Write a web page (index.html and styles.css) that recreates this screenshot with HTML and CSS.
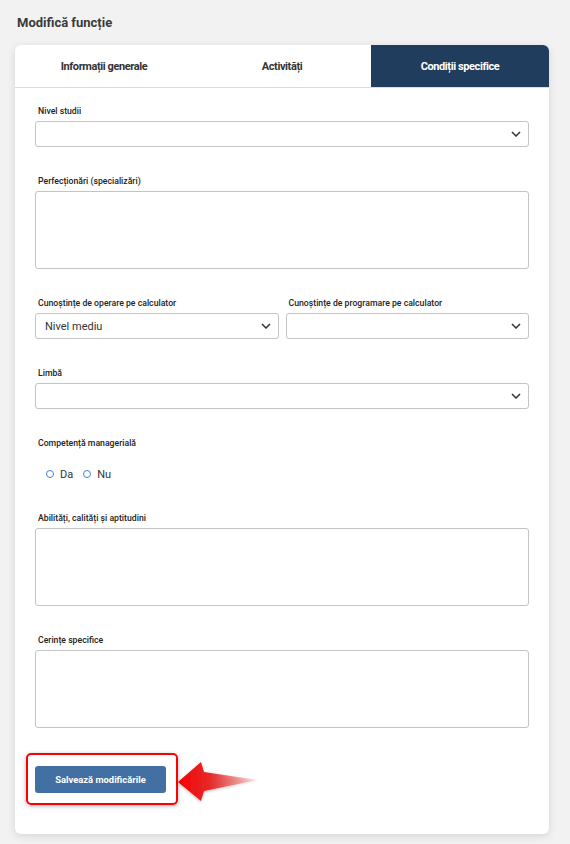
FILE: index.html
```html
<!DOCTYPE html>
<html lang="ro">
<head>
<meta charset="utf-8">
<title>Modifică funcție</title>
<link rel="stylesheet" href="styles.css">
</head>
<body>
<h1 class="page-title">Modifică funcție</h1>
<div class="card">
  <div class="tabs">
    <div class="tab">Informații generale</div>
    <div class="tab">Activități</div>
    <div class="tab active">Condiții specifice</div>
  </div>
  <form class="form">
    <div class="field">
      <label class="label">Nivel studii</label>
      <div class="select"><span class="value"></span><svg class="chev" viewBox="0 0 10 6" width="10" height="6"><path d="M1 1l4 4 4-4" fill="none" stroke="#333" stroke-width="1.5"/></svg></div>
    </div>
    <div class="field">
      <label class="label">Perfecționări (specializări)</label>
      <div class="textarea"></div>
    </div>
    <div class="field row">
      <div class="col">
        <label class="label">Cunoștințe de operare pe calculator</label>
        <div class="select"><span class="value">Nivel mediu</span><svg class="chev" viewBox="0 0 10 6" width="10" height="6"><path d="M1 1l4 4 4-4" fill="none" stroke="#333" stroke-width="1.5"/></svg></div>
      </div>
      <div class="col">
        <label class="label">Cunoștințe de programare pe calculator</label>
        <div class="select"><span class="value"></span><svg class="chev" viewBox="0 0 10 6" width="10" height="6"><path d="M1 1l4 4 4-4" fill="none" stroke="#333" stroke-width="1.5"/></svg></div>
      </div>
    </div>
    <div class="field">
      <label class="label">Limbă</label>
      <div class="select"><span class="value"></span><svg class="chev" viewBox="0 0 10 6" width="10" height="6"><path d="M1 1l4 4 4-4" fill="none" stroke="#333" stroke-width="1.5"/></svg></div>
    </div>
    <div class="field radio-field">
      <label class="label">Competență managerială</label>
      <div class="radios">
        <span class="radio"><span class="circle"></span>Da</span>
        <span class="radio"><span class="circle"></span>Nu</span>
      </div>
    </div>
    <div class="field">
      <label class="label">Abilități, calități și aptitudini</label>
      <div class="textarea"></div>
    </div>
    <div class="field">
      <label class="label">Cerințe specifice</label>
      <div class="textarea"></div>
    </div>
    <div class="actions">
      <div class="highlight-wrap">
        <button type="button" class="btn">Salvează modificările</button>
        <span class="highlight"></span>
        <svg class="arrow" width="90" height="50" viewBox="0 0 90 50">
          <defs>
            <linearGradient id="ag" x1="0" y1="0" x2="1" y2="0">
              <stop offset="0" stop-color="#f40000"/>
              <stop offset="0.4" stop-color="#e62a2a"/>
              <stop offset="1" stop-color="#f04a4a" stop-opacity="0.1"/>
            </linearGradient>
            <filter id="sh" x="-20%" y="-30%" width="140%" height="160%">
              <feDropShadow dx="0" dy="1" stdDeviation="1.5" flood-color="#000" flood-opacity="0.3"/>
            </filter>
          </defs>
          <polygon points="2,24 25,4 28,14 82,22 28,33 25,43" fill="url(#ag)" filter="url(#sh)"/>
        </svg>
      </div>
    </div>
  </form>
</div>
</body>
</html>
```
FILE: styles.css
```css
* { box-sizing: border-box; }
html, body { margin: 0; padding: 0; }
body {
  background: #f2f2f2;
  font-family: Roboto, "Liberation Sans", Arial, sans-serif;
  color: #333;
  width: 570px;
  min-height: 844px;
  overflow: hidden;
}
.page-title {
  margin: 0;
  padding: 13px 0 0 17px;
  font-size: 13px;
  line-height: 20px;
  font-weight: 700;
  color: #3a3a3a;
}
.card {
  margin: 12px 0 0 15px;
  width: 534px;
  background: #fff;
  border-radius: 6px;
  box-shadow: 0 2px 8px rgba(0,0,0,0.12);
  overflow: hidden;
}
.tabs {
  display: grid;
  grid-template-columns: 1fr 1fr 1fr;
  border-bottom: 1px solid #dcdcdc;
}
.tab {
  height: 42px;
  display: flex;
  align-items: center;
  justify-content: center;
  font-size: 11px;
  letter-spacing: -0.4px;
  font-weight: 700;
  color: #333;
}
.tab.active {
  background: #213d5e;
  color: #fff;
}
.form {
  padding: 16px 20px 41px 20px;
}
.field { margin-bottom: 27px; }
.label {
  display: block;
  font-size: 8.7px;
  line-height: 14px;
  font-weight: 500;
  color: #222;
  margin-bottom: 3px;
  padding-left: 3px;
  white-space: nowrap;
}
.select {
  height: 26px;
  border: 1px solid #c4c4c4;
  border-radius: 3px;
  display: flex;
  align-items: center;
  justify-content: space-between;
  padding: 0 7px 0 9px;
  background: #fff;
}
.value {
  font-size: 11px;
  color: #333;
}
.chev { display: block; }
.textarea {
  height: 78px;
  border: 1px solid #c4c4c4;
  border-radius: 3px;
}
.row {
  display: grid;
  grid-template-columns: 1fr 1fr;
  column-gap: 7px;
}
.radio-field { margin-bottom: 29px; }
.radios {
  margin-top: 16px;
  height: 16px;
  display: flex;
  align-items: center;
  gap: 10px;
  padding-left: 11px;
}
.radio {
  display: flex;
  align-items: center;
  gap: 6px;
  font-size: 11px;
  color: #333;
}
.circle {
  width: 8px;
  height: 8px;
  border: 1px solid #4a80d8;
  border-radius: 50%;
}
.actions {
  padding-top: 11px;
}
.highlight-wrap {
  position: relative;
  display: inline-block;
}
.btn {
  display: block;
  width: 131px;
  height: 27px;
  border: none;
  border-radius: 3px;
  background: #4270a2;
  color: #fff;
  font-family: Roboto, "Liberation Sans", Arial, sans-serif;
  font-size: 9.4px;
  font-weight: 700;
  padding: 0;
}
.highlight {
  position: absolute;
  left: -9px;
  top: -13px;
  width: 152px;
  height: 52px;
  border: 2px solid #f00;
  border-radius: 5px;
  box-shadow: 0 1px 4px rgba(0,0,0,0.3);
  pointer-events: none;
}
.arrow {
  position: absolute;
  left: 141px;
  top: -8px;
}
```
